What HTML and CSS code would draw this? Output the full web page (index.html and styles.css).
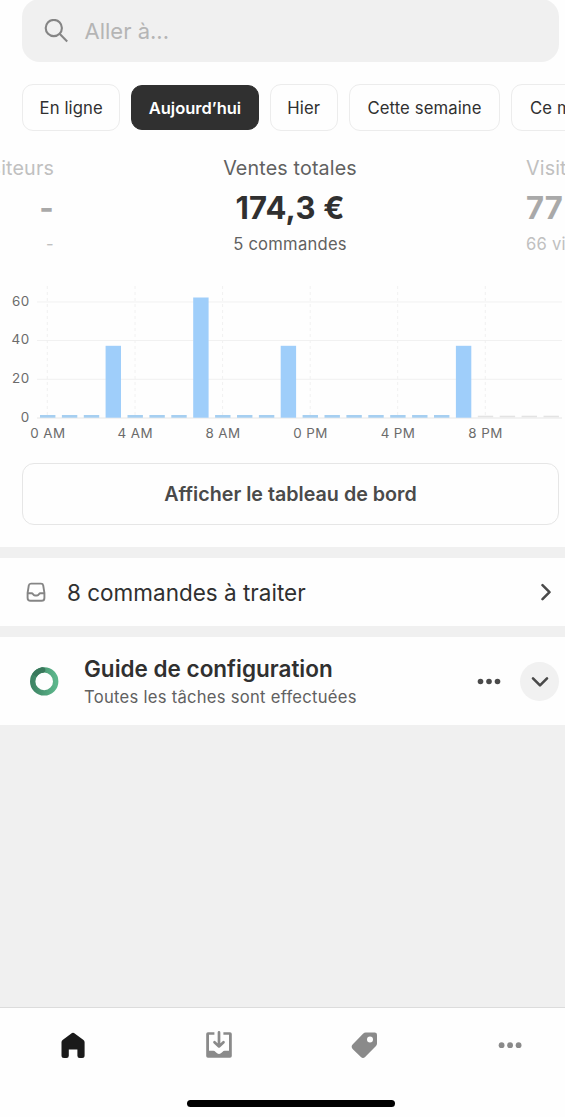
FILE: index.html
```html
<!DOCTYPE html>
<html lang="fr">
<head>
    <meta charset="utf-8">
    <title>Accueil</title>
    <link rel="stylesheet" href="styles.css">
</head>
<body>
    <div class="app">
        <div class="overview">
            <div class="search">
                <svg width="24" height="24" viewBox="0 0 24 24" fill="none" stroke="#858585" stroke-width="2.1">
                    <circle cx="9.8" cy="9" r="8.1"/>
                    <path d="M15.6 14.8L23.2 22.4"/>
                </svg>
                <span class="search-text">Aller à...</span>
            </div>

            <div class="chips">
                <a class="chip chip-live">En ligne</a>
                <a class="chip chip-today active">Aujourd’hui</a>
                <a class="chip chip-yesterday">Hier</a>
                <a class="chip chip-week">Cette semaine</a>
                <a class="chip chip-month">Ce mois-ci</a>
            </div>

            <div class="metrics">
                <div class="metric metric-prev">
                    <div class="metric-label">Visiteurs</div>
                    <div class="metric-value">-</div>
                    <div class="metric-detail">-</div>
                </div>
                <div class="metric metric-current">
                    <div class="metric-label">Ventes totales</div>
                    <div class="metric-value">174,3 €</div>
                    <div class="metric-detail">5 commandes</div>
                </div>
                <div class="metric metric-next">
                    <div class="metric-label">Visites</div>
                    <div class="metric-value">77</div>
                    <div class="metric-detail">66 visiteurs</div>
                </div>
            </div>

            <svg class="chart" width="565" height="166" viewBox="0 280 565 166">
                <path class="grid" d="M37 302H562M37 340.5H562M37 379.3H562"/>
                <path class="grid dashed" d="M47.3 286V417M135.1 286V417M222.6 286V417M310.2 286V417M397.7 286V417M485.3 286V417"/>
                <path class="axis" d="M37 418H562"/>
                <g class="empty">
                    <rect x="40" y="415" width="15.4" height="2.7"/>
                    <rect x="61.9" y="415" width="15.4" height="2.7"/>
                    <rect x="83.8" y="415" width="15.4" height="2.7"/>
                    <rect x="127.5" y="415" width="15.4" height="2.7"/>
                    <rect x="149.4" y="415" width="15.4" height="2.7"/>
                    <rect x="171.3" y="415" width="15.4" height="2.7"/>
                    <rect x="215.1" y="415" width="15.4" height="2.7"/>
                    <rect x="237" y="415" width="15.4" height="2.7"/>
                    <rect x="258.9" y="415" width="15.4" height="2.7"/>
                    <rect x="302.6" y="415" width="15.4" height="2.7"/>
                    <rect x="324.5" y="415" width="15.4" height="2.7"/>
                    <rect x="346.4" y="415" width="15.4" height="2.7"/>
                    <rect x="368.3" y="415" width="15.4" height="2.7"/>
                    <rect x="390.2" y="415" width="15.4" height="2.7"/>
                    <rect x="412.1" y="415" width="15.4" height="2.7"/>
                    <rect x="434" y="415" width="15.4" height="2.7"/>
                </g>
                <g class="bars">
                    <rect x="105.6" y="345.8" width="15.4" height="71.9"/>
                    <rect x="193.2" y="297.5" width="15.4" height="120.2"/>
                    <rect x="280.7" y="345.8" width="15.4" height="71.9"/>
                    <rect x="455.9" y="345.8" width="15.4" height="71.9"/>
                </g>
                <g class="future">
                    <rect x="477.8" y="415.7" width="15.4" height="1.6"/>
                    <rect x="499.7" y="415.7" width="15.4" height="1.6"/>
                    <rect x="521.6" y="415.7" width="15.4" height="1.6"/>
                    <rect x="543.5" y="415.7" width="15.4" height="1.6"/>
                </g>
                <g class="y-labels">
                    <text x="29.5" y="306">60</text>
                    <text x="29.5" y="344">40</text>
                    <text x="29.5" y="383">20</text>
                    <text x="29.5" y="421.5">0</text>
                </g>
                <g class="x-labels">
                    <text x="47.9" y="437.5">0 AM</text>
                    <text x="135.3" y="437.5">4 AM</text>
                    <text x="223" y="437.5">8 AM</text>
                    <text x="310.5" y="437.5">0 PM</text>
                    <text x="398" y="437.5">4 PM</text>
                    <text x="485.5" y="437.5">8 PM</text>
                </g>
            </svg>

            <a class="dashboard-btn">Afficher le tableau de bord</a>
        </div>

        <div class="orders">
            <svg width="20" height="20" viewBox="0 0 20 20" fill="none" stroke="#858585" stroke-width="1.9" stroke-linejoin="round">
                <path d="M5 1.6H15Q16.9 1.6 17.2 3.3L18.4 10.8V15.9Q18.4 18.8 15.5 18.8H4.5Q1.6 18.8 1.6 15.9V10.8L2.8 3.3Q3.1 1.6 5 1.6Z"/>
                <path d="M1.6 11.2H5.5Q6.5 11.2 7.1 12.2Q7.8 13.5 9 13.5H11Q12.2 13.5 12.9 12.2Q13.5 11.2 14.5 11.2H18.4"/>
            </svg>
            <span class="orders-text">8 commandes à traiter</span>
            <svg width="12" height="20" viewBox="0 0 12 20" fill="none" stroke="#4a4a4a" stroke-width="2.5" stroke-linecap="round" stroke-linejoin="round">
                <path d="M1.5 3.2L8.5 10.2L1.5 17.2"/>
            </svg>
        </div>

        <div class="guide">
            <svg width="30" height="30" viewBox="0 0 30 30" fill="none">
                <defs>
                    <linearGradient id="ring" x1="0" y1="0" x2="1" y2="0">
                        <stop offset="0" stop-color="#3f8565"/>
                        <stop offset="1" stop-color="#5cb68b"/>
                    </linearGradient>
                </defs>
                <circle cx="15.2" cy="15.4" r="11.5" stroke="url(#ring)" stroke-width="5.4"/>
                <path d="M5.4 9.5A11.5 11.5 0 0 1 14 3.9" stroke="#39795c" stroke-width="5.4"/>
                <circle cx="13.7" cy="4" r="2.7" fill="#39795c"/>
            </svg>
            <div class="guide-text">
                <div class="guide-title">Guide de configuration</div>
                <div class="guide-sub">Toutes les tâches sont effectuées</div>
            </div>
            <svg width="24" height="8" viewBox="0 0 24 8" fill="#4a4a4a">
                <circle cx="3.5" cy="4.5" r="2.8"/>
                <circle cx="12" cy="4.5" r="2.8"/>
                <circle cx="20.5" cy="4.5" r="2.8"/>
            </svg>
            <div class="toggle">
                <svg width="20" height="14" viewBox="0 0 20 14" fill="none" stroke="#4a4a4a" stroke-width="2.6" stroke-linecap="round" stroke-linejoin="round">
                    <path d="M3 4.3L10 11.3L17 4.3"/>
                </svg>
            </div>
        </div>

        <div class="nav">
            <div class="tabs">
                <a class="tab">
                    <svg width="28" height="28" viewBox="0 0 28 28" fill="#1a1a1a">
                        <path d="M13 2Q14 1.3 15 2L24.5 9Q25.6 9.9 25.6 11.3V24.5Q25.6 27 23.1 27H20.7Q18.4 27 18.4 24.7V18.4H9.8V24.7Q9.8 27 7.5 27H5Q2.5 27 2.5 24.5V11.3Q2.5 9.9 3.6 9Z"/>
                    </svg>
                </a>
                <a class="tab">
                    <svg width="28" height="28" viewBox="0 0 28 28" fill="#8a8a8a">
                        <path d="M3 1.3H9.4V3.8H4V19.8H8.3Q9.6 19.8 10.6 21L12.1 22.3Q14 23.5 15.9 22.3L17.4 21Q18.4 19.8 19.7 19.8H24V3.8H18.4V1.3H25Q26.8 1.3 26.8 3V25Q26.8 26.8 25 26.8H3Q1.2 26.8 1.2 25V3Q1.2 1.3 3 1.3Z"/>
                        <path d="M14 1.4V14.6M9.5 11.2L14 15.4L18.5 11.2" fill="none" stroke="#8a8a8a" stroke-width="2.7" stroke-linecap="round" stroke-linejoin="round"/>
                    </svg>
                </a>
                <a class="tab">
                    <svg width="28" height="28" viewBox="0 0 28 28" fill="#8a8a8a">
                        <path fill-rule="evenodd" d="M15.8 1.4H24.7Q27 1.4 27 3.7V12.5Q27 13.9 26 14.9L15.1 26Q13 27.9 10.9 26L2.6 17.9Q.7 15.7 2.6 13.6L13 2.7Q14.3 1.4 15.8 1.4ZM20 5.6A3 3 0 1 0 20 11.6A3 3 0 1 0 20 5.6Z"/>
                    </svg>
                </a>
                <a class="tab">
                    <svg width="28" height="28" viewBox="0 0 28 28" fill="#8a8a8a">
                        <circle cx="5.6" cy="14.2" r="2.9"/>
                        <circle cx="14.1" cy="14.2" r="2.9"/>
                        <circle cx="22.6" cy="14.2" r="2.9"/>
                    </svg>
                </a>
            </div>
            <div class="home-bar"></div>
        </div>
    </div>
</body>
</html>
```
FILE: styles.css
```css
* {
    box-sizing: border-box;
}

body {
    margin: 0;
    background-color: #f0f0f0;
    font-family: Inter, sans-serif;
    color: #303030;
}

svg {
    display: block;
    flex-shrink: 0;
}

.app {
    display: flex;
    flex-direction: column;
    width: 565px;
    height: 1117px;
    overflow: hidden;
}

.overview {
    height: 547px;
    background-color: #fefefe;
}

.search {
    display: flex;
    align-items: center;
    height: 63px;
    margin: -1px 6px 0 22px;
    padding-left: 22px;
    background-color: #f0f0f0;
    border-radius: 18px;
}

.search-text {
    margin-left: 16.5px;
    font-size: 22px;
    color: #b5b5b5;
}

.chips {
    display: flex;
    gap: 11px;
    width: 700px;
    margin: 22px 0 0 22px;
}

.chip {
    flex-shrink: 0;
    height: 47px;
    border: 1px solid #ececec;
    border-radius: 11px;
    line-height: 46px;
    text-align: center;
    font-size: 16.7px;
    letter-spacing: 0.1px;
    white-space: nowrap;
}

.chip-live { width: 98.3px; }
.chip-today { width: 127.3px; }
.chip-yesterday { width: 68.3px; }
.chip-week { width: 151.3px; }
.chip-month { width: 124px; }

.chip.active {
    height: 45px;
    margin-top: 1px;
    border-color: #303030;
    background-color: #303030;
    color: #fff;
    line-height: 44px;
    font-size: 16.5px;
    letter-spacing: 0;
    font-weight: 600;
}

.metrics {
    display: flex;
    justify-content: space-between;
    width: 645px;
    height: 149px;
    margin-left: -40px;
    padding-top: 24px;
}

.metric {
    width: 94px;
    white-space: nowrap;
}

.metric-label {
    height: 27px;
    line-height: 27px;
    font-size: 19.7px;
    letter-spacing: 0.15px;
    color: #616161;
}

.metric-value {
    height: 50px;
    line-height: 51px;
    font-size: 31px;
    letter-spacing: 0.2px;
    font-weight: 700;
}

.metric-detail {
    height: 24px;
    line-height: 24px;
    font-size: 16.6px;
    letter-spacing: 0.25px;
    color: #616161;
}

.metric-prev {
    text-align: right;
}

.metric-current {
    width: 201px;
    text-align: center;
}

.metric-next {
    width: 79px;
}

.metric-prev .metric-label,
.metric-prev .metric-detail,
.metric-next .metric-label,
.metric-next .metric-detail {
    color: #c0c0c0;
}

.metric-prev .metric-value,
.metric-next .metric-value {
    color: #a9a9a9;
}

.grid {
    stroke: #f1f1f1;
    stroke-width: 1;
}

.dashed {
    stroke-dasharray: 3 3;
}

.axis {
    stroke: #e6e6e6;
}

.bars {
    fill: #9fcefa;
}

.empty {
    fill: #a6cff1;
}

.future {
    fill: #e3e3e3;
}

.chart text {
    fill: #6b6b6b;
    font-size: 13.4px;
    letter-spacing: 0.4px;
}

.y-labels {
    text-anchor: end;
}

.x-labels {
    text-anchor: middle;
}

.dashboard-btn {
    display: block;
    height: 62px;
    margin: 17px 6px 0 22px;
    border: 1px solid #e6e6e6;
    border-radius: 12px;
    line-height: 61.5px;
    text-align: center;
    font-size: 19.7px;
    font-weight: 600;
    color: #4a4a4a;
}

.orders {
    display: flex;
    align-items: center;
    height: 68px;
    margin-top: 11px;
    padding: 0 12px 0 26px;
    background-color: #fefefe;
}

.orders-text {
    flex: 1;
    margin-left: 21px;
    font-size: 22.5px;
}

.guide {
    display: flex;
    align-items: center;
    height: 88px;
    margin-top: 11px;
    padding: 0 6px 0 29px;
    background-color: #fefefe;
}

.guide-text {
    flex: 1;
    margin-left: 25px;
    padding-top: 2px;
}

.guide-title {
    height: 30px;
    line-height: 30px;
    font-size: 22.5px;
    font-weight: 600;
}

.guide-sub {
    height: 26px;
    line-height: 27px;
    font-size: 16.6px;
    letter-spacing: 0.27px;
    color: #616161;
}

.toggle {
    display: flex;
    align-items: center;
    justify-content: center;
    width: 39px;
    height: 39px;
    margin-left: 19px;
    border-radius: 50%;
    background-color: #f1f1f1;
}

.nav {
    height: 110px;
    margin-top: auto;
    border-top: 1px solid #dcdcdc;
    background-color: #fefefe;
}

.tabs {
    display: flex;
    justify-content: space-between;
    padding: 23px 41px 0 59px;
}

.home-bar {
    width: 208px;
    height: 7px;
    margin: 41px auto 0 186.5px;
    border-radius: 4px;
    background-color: #000;
}
```
